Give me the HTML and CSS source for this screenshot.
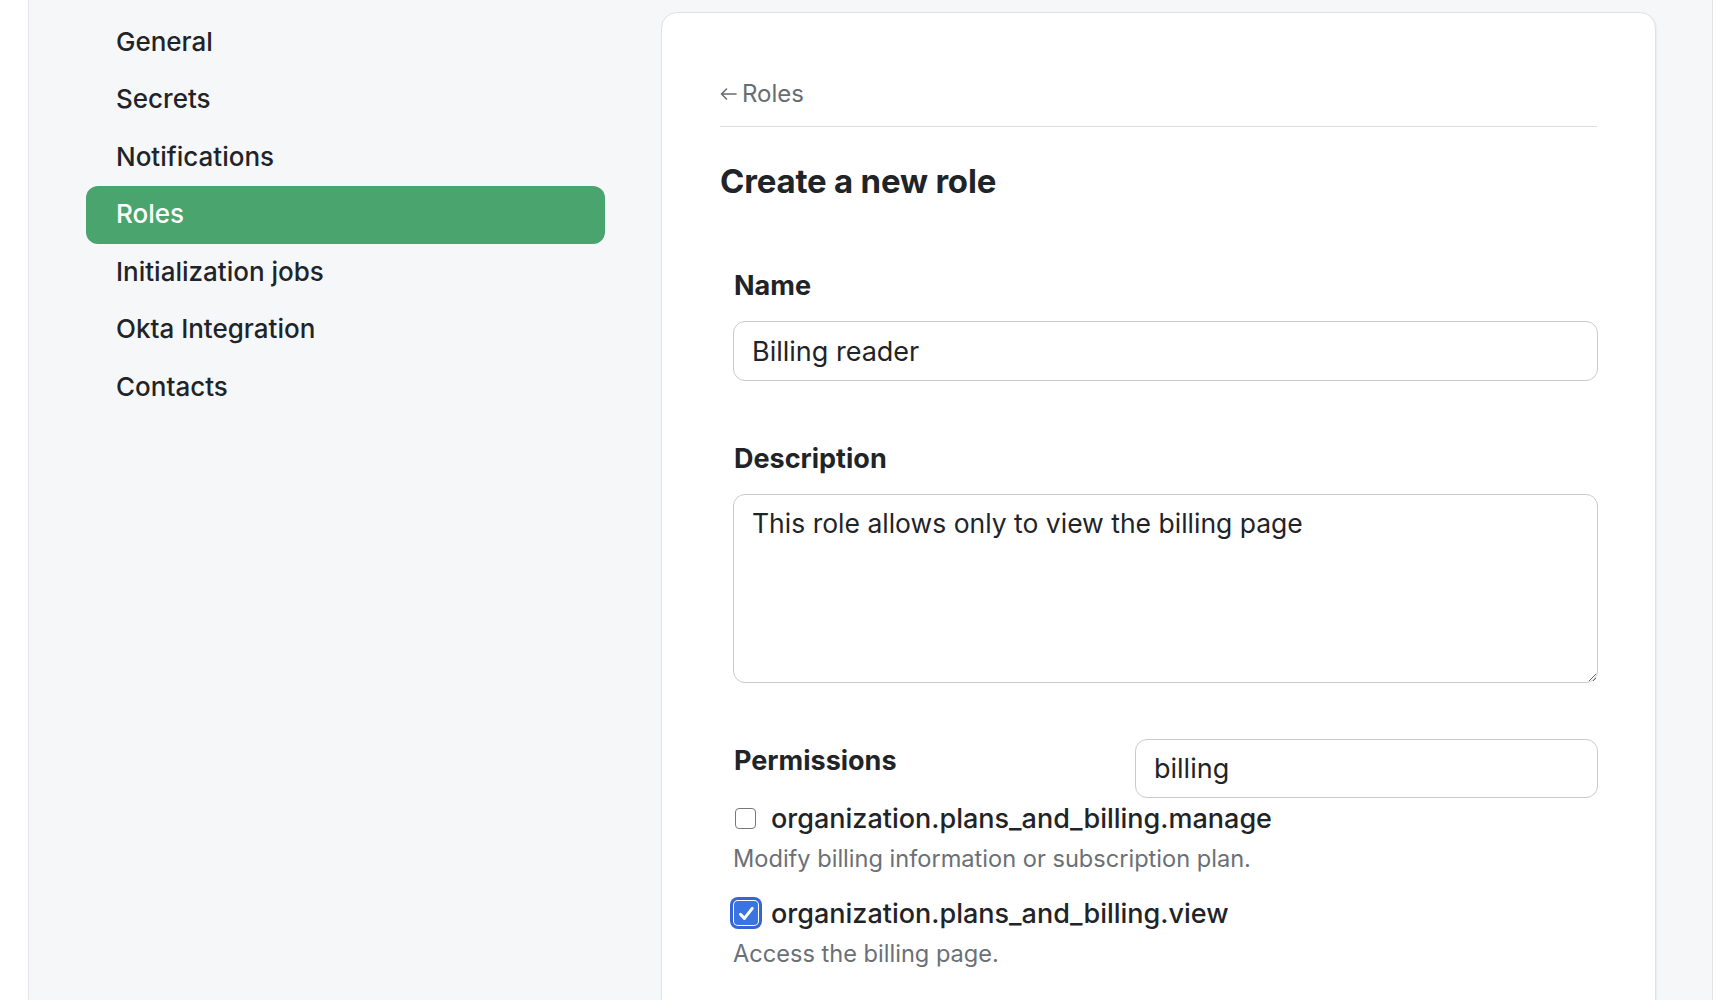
FILE: index.html
```html
<!DOCTYPE html>
<html lang="en">
<head>
<meta charset="utf-8">
<title>Create a new role</title>
<link rel="stylesheet" href="styles.css">
</head>
<body>
<div class="panel">
  <nav class="side-nav">
    <a class="nav-item" href="#">General</a>
    <a class="nav-item" href="#">Secrets</a>
    <a class="nav-item" href="#">Notifications</a>
    <a class="nav-item active" href="#">Roles</a>
    <a class="nav-item" href="#">Initialization jobs</a>
    <a class="nav-item" href="#">Okta Integration</a>
    <a class="nav-item" href="#">Contacts</a>
  </nav>
  <main class="card">
    <div class="card-head">
      <a class="back-link" href="#"><svg class="back-arrow" viewBox="0 0 17 12" width="17" height="12"><path d="M16 6H1.5M6.5 1L1.5 6l5 5" fill="none" stroke="currentColor" stroke-width="1.6" stroke-linecap="round" stroke-linejoin="round"/></svg>Roles</a>
    </div>
    <h1 class="title">Create a new role</h1>
    <form class="form">
      <label class="field-label" for="name">Name</label>
      <input class="text-input" id="name" type="text" value="Billing reader">

      <label class="field-label desc-label" for="desc">Description</label>
      <textarea class="text-area" id="desc">This role allows only to view the billing page</textarea>

      <div class="perm-head">
        <span class="field-label perm-label">Permissions</span>
        <input class="text-input search-input" type="text" value="billing">
      </div>

      <div class="perm perm-1">
        <label class="perm-row">
          <span class="box"></span>
          <span class="perm-name">organization.plans_and_billing.manage</span>
        </label>
        <p class="perm-desc">Modify billing information or subscription plan.</p>
      </div>
      <div class="perm perm-2">
        <label class="perm-row">
          <span class="box checked"><svg viewBox="0 0 16 16" width="21" height="21"><path d="M3.4 8.6l3 3.1 6-7.6" fill="none" stroke="#fff" stroke-width="2.3" stroke-linecap="round" stroke-linejoin="round"/></svg></span>
          <span class="perm-name">organization.plans_and_billing.view</span>
        </label>
        <p class="perm-desc">Access the billing page.</p>
      </div>
    </form>
  </main>
</div>
</body>
</html>
```
FILE: styles.css
```css
* { box-sizing: border-box; }
html, body { margin: 0; height: 100%; }
body {
  background: #ffffff;
  font-family: Inter, "Noto Sans", sans-serif;
  color: #1f2429;
  overflow: hidden;
}
.panel {
  margin-left: 28px;
  width: 1685px;
  height: 1000px;
  background: #f6f7f9;
  border-left: 1px solid #e2e4e7;
  border-right: 1px solid #e2e4e7;
  display: flex;
  align-items: flex-start;
  gap: 56px;
  padding-left: 57px;
}
.side-nav {
  width: 519px;
  padding-top: 13.5px;
  display: flex;
  flex-direction: column;
  flex-shrink: 0;
}
.nav-item {
  display: block;
  height: 57.5px;
  line-height: 56px;
  padding-left: 30px;
  font-size: 26px;
  font-weight: 500;
  color: #1f2429;
  text-decoration: none;
  border-radius: 12px;
}
.nav-item.active {
  background: #4aa46e;
  color: #ffffff;
}
.card {
  margin-top: 12px;
  width: 995px;
  min-height: 1200px;
  flex-shrink: 0;
  background: #ffffff;
  border: 1px solid #dfe1e4;
  border-radius: 16px;
  box-shadow: 1px 1px 2px rgba(0,0,0,0.05);
  padding: 65px 58px 0 58px;
}
.card-head {
  padding-bottom: 18px;
  border-bottom: 1px solid #dcdee1;
}
.back-link {
  display: inline-flex;
  align-items: center;
  gap: 5px;
  height: 30px;
  font-size: 24px;
  color: #686d73;
  text-decoration: none;
}
.back-arrow { margin-top: 2px; }
.title {
  margin: 34px 0 0 0;
  font-size: 33px;
  line-height: 40px;
  font-weight: 700;
  letter-spacing: -0.2px;
}
.form {
  margin: 68px -1px 0 13px;
  display: flex;
  flex-direction: column;
}
.field-label {
  display: block;
  font-size: 27px;
  line-height: 34px;
  font-weight: 700;
  padding-left: 1px;
}
.text-input, .text-area {
  display: block;
  margin-top: 18px;
  width: 100%;
  height: 60px;
  border: 1.5px solid #c8cacd;
  border-radius: 12px;
  padding: 0 18px;
  font-family: inherit;
  font-size: 27px;
  color: #1f2429;
  background: #fff;
  outline: none;
}
.text-area {
  height: 189px;
  padding-top: 13px;
  font-size: 26.5px;
  line-height: 1.2;
}
.desc-label { margin-top: 61px; }
.perm-head {
  margin-top: 56px;
  display: flex;
  align-items: flex-start;
  justify-content: space-between;
}
.perm-label { margin-top: 5px; }
.search-input {
  margin-top: 0;
  width: 463px;
  height: 59px;
}
.perm-1 { margin-top: 3px; }
.perm-row {
  display: flex;
  align-items: center;
  gap: 15px;
  height: 36px;
  padding-left: 2px;
}
.perm-name {
  font-size: 27px;
  font-weight: 500;
  line-height: 36px;
}
.box {
  width: 21px;
  height: 21px;
  border: 1.5px solid #75787c;
  border-radius: 4px;
  background: #fff;
  margin-top: -2px;
  display: flex;
  align-items: center;
  justify-content: center;
  flex-shrink: 0;
}
.box.checked {
  width: 24px;
  height: 24px;
  margin-left: -1px;
  margin-right: -2px;
  border: none;
  background: #3a74e2;
  box-shadow: 0 0 0 1px #ffffff, 0 0 0 4px #3566d8;
}
.perm-desc {
  margin: 7px 0 0 0;
  font-size: 23.6px;
  line-height: 30px;
  color: #6b7076;
}
.perm-2 { margin-top: 22px; }
```
